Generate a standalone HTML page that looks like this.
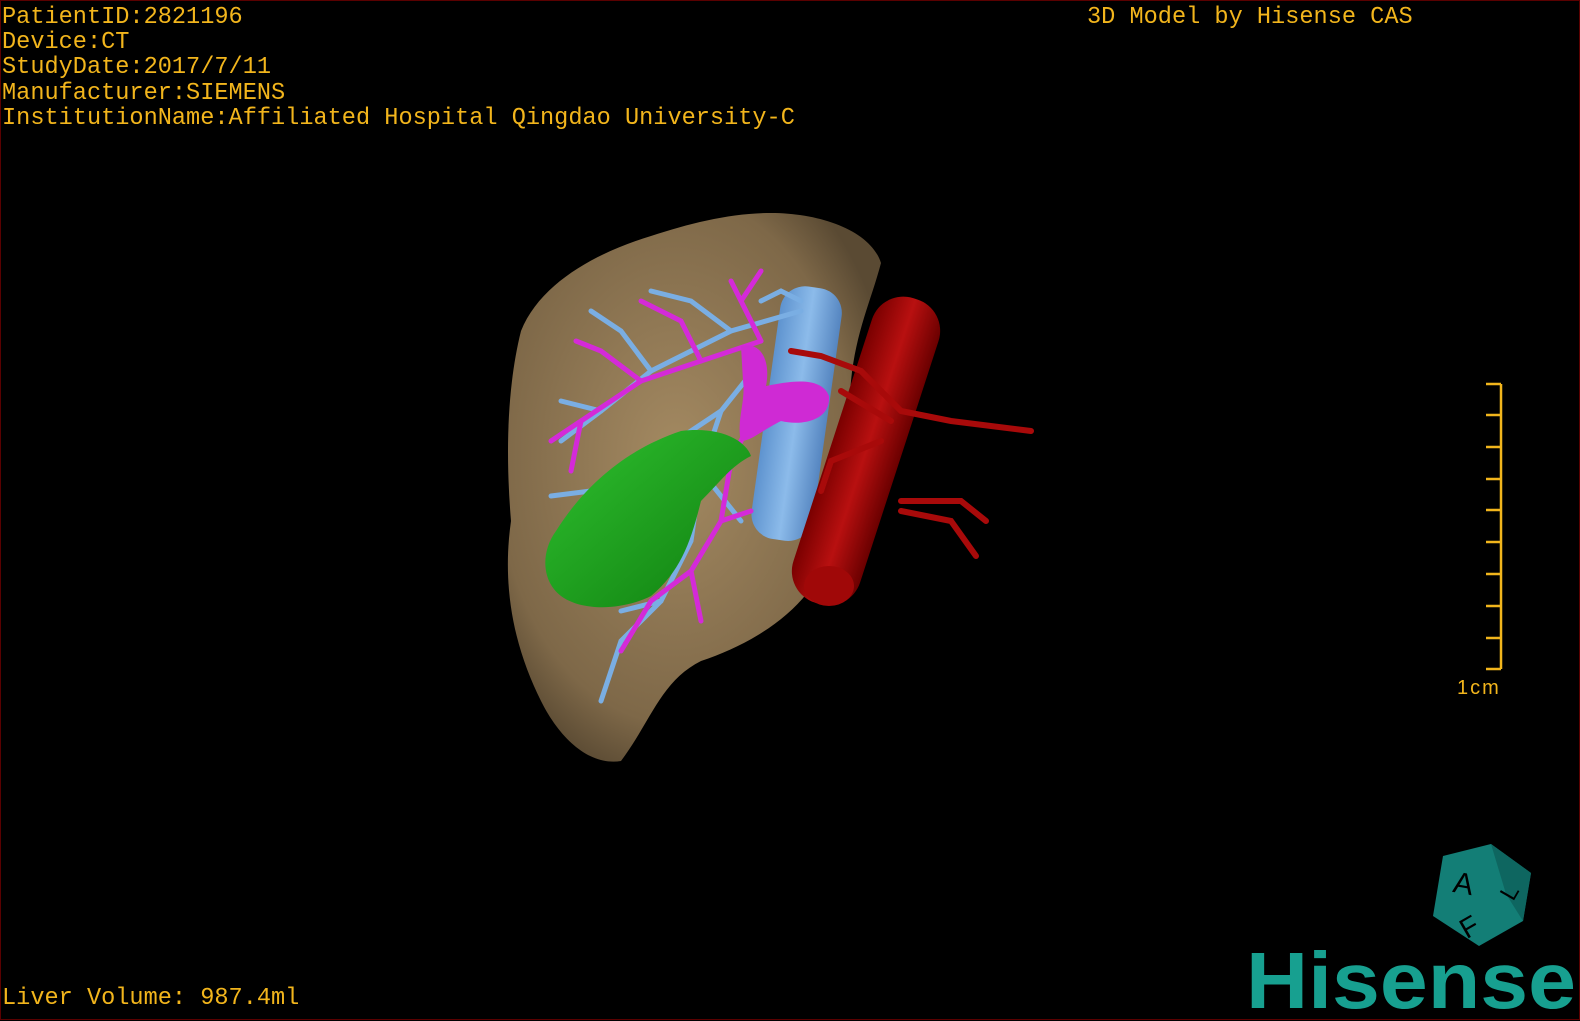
<!DOCTYPE html>
<html><head><meta charset="utf-8"><style>
html,body{margin:0;padding:0;background:#000;}
body{width:1580px;height:1020px;position:relative;overflow:hidden;box-sizing:border-box;border:1px solid #5a0000;}
.t{position:absolute;color:#f2b51c;font-family:"Liberation Mono",monospace;font-size:23.6px;line-height:25.2px;white-space:pre;letter-spacing:0;}
</style></head><body>
<div class="t" style="left:1px;top:4px">PatientID:2821196
Device:CT
StudyDate:2017/7/11
Manufacturer:SIEMENS
InstitutionName:Affiliated Hospital Qingdao University-C</div>
<div class="t" style="left:1086px;top:4px">3D Model by Hisense CAS</div>
<div class="t" style="left:1px;top:985px">Liver Volume: 987.4ml</div>
<svg width="1580" height="1020" style="position:absolute;left:0;top:0">
<defs>
<radialGradient id="lv" cx="0.45" cy="0.45" r="0.6"><stop offset="0" stop-color="#a48a62"/><stop offset="0.8" stop-color="#7e6848"/><stop offset="1" stop-color="#5a4a33"/></radialGradient>
<linearGradient id="gb" x1="0" y1="0" x2="1" y2="1"><stop offset="0" stop-color="#2fc12f"/><stop offset="1" stop-color="#0f7d0f"/></linearGradient>
<linearGradient id="ivc" x1="0" x2="1"><stop offset="0" stop-color="#5e93cf"/><stop offset="0.5" stop-color="#8cbbea"/><stop offset="1" stop-color="#5585c0"/></linearGradient>
<linearGradient id="ao" x1="0" x2="1"><stop offset="0" stop-color="#7a0000"/><stop offset="0.5" stop-color="#b81010"/><stop offset="1" stop-color="#6a0000"/></linearGradient>
</defs>
<path d="M770 212 C820 212 870 230 880 262 C870 300 855 330 850 380 C845 440 835 480 830 540 C820 600 760 640 700 660 C660 680 650 720 620 760 C590 765 560 740 540 700 C515 650 500 590 510 520 C505 460 505 390 520 330 C540 280 600 250 650 235 C690 222 730 212 770 212Z" fill="url(#lv)"/>
<rect x="765" y="285" width="62" height="255" rx="25" fill="url(#ivc)" transform="rotate(8 795 410)"/>
<g stroke="#7aaee3" stroke-width="5" fill="none" stroke-linecap="round">
<path d="M800 310 L730 330 L650 370 L600 410 L560 440"/><path d="M730 330 L690 300 L650 290"/><path d="M650 370 L620 330 L590 310"/><path d="M600 410 L560 400"/><path d="M760 360 L720 410 L660 450 L590 490 L550 495"/><path d="M720 410 L700 470 L690 540 L660 600 L620 640 L600 700"/><path d="M660 600 L620 610"/><path d="M700 470 L740 520"/><path d="M800 300 L780 290 L760 300"/>
</g>
<g stroke="#d42ad8" stroke-width="5" fill="none" stroke-linecap="round">
<path d="M760 340 L700 360 L640 380 L580 420 L550 440"/><path d="M700 360 L680 320 L640 300"/><path d="M640 380 L600 350 L575 340"/><path d="M760 340 L740 300 L730 280"/><path d="M740 300 L760 270"/><path d="M760 400 L730 460 L720 520 L690 570 L650 600 L620 650"/><path d="M720 520 L750 510"/><path d="M690 570 L700 620"/><path d="M580 420 L570 470"/>
</g>
<path d="M740 345 C760 340 770 360 765 385 C790 380 820 375 828 395 C830 420 800 425 780 420 C760 430 750 440 740 440 C735 420 745 400 742 380Z" fill="#cf2ad4"/>
<path d="M680 430 C720 425 745 440 750 455 C730 465 720 480 700 500 C690 540 680 570 650 595 C620 610 580 610 560 595 C540 580 540 550 555 530 C580 490 620 450 680 430Z" fill="url(#gb)"/>
<rect x="830" y="290" width="70" height="320" rx="33" fill="url(#ao)" transform="rotate(18 865 450)"/>
<ellipse cx="828" cy="585" rx="25" ry="20" fill="#a00808"/>
<g stroke="#a80a0a" stroke-width="6" fill="none" stroke-linecap="round">
<path d="M900 410 L950 420 L1030 430"/><path d="M900 410 L860 370 L820 355 L790 350"/><path d="M890 420 L840 390"/><path d="M880 440 L830 460 L820 490"/><path d="M900 500 L960 500 L985 520"/><path d="M900 510 L950 520 L975 555"/>
</g>
<g stroke="#f2b51c" stroke-width="2.5" fill="none">
<path d="M1500 383 V668"/>
<path d="M1485 383H1500M1485 414H1500M1485 446H1500M1485 478H1500M1485 509H1500M1485 541H1500M1485 573H1500M1485 605H1500M1485 637H1500M1485 668H1500"/>
</g>
<text x="1456" y="693" fill="#f2b51c" font-family="Liberation Sans,sans-serif" font-size="20" letter-spacing="2">1cm</text>
<polygon points="1442,855 1490,843 1530,872 1522,920 1478,945 1432,915" fill="#137e76"/>
<polygon points="1490,843 1530,872 1522,920 1505,893" fill="#0e6660"/>
<text x="1453" y="893" fill="#000" font-family="Liberation Sans,sans-serif" font-size="30" transform="rotate(10 1465 880)">A</text>
<text x="1500" y="900" fill="#000" font-family="Liberation Sans,sans-serif" font-size="24" transform="rotate(-60 1507 890)">L</text>
<text x="1458" y="934" fill="#000" font-family="Liberation Sans,sans-serif" font-size="28" transform="rotate(-30 1470 922)">F</text>
<text x="1245" y="1007" fill="#17a090" font-family="Liberation Sans,sans-serif" font-weight="bold" font-size="80" textLength="330" lengthAdjust="spacingAndGlyphs">Hisense</text>
</svg>
</body></html>
